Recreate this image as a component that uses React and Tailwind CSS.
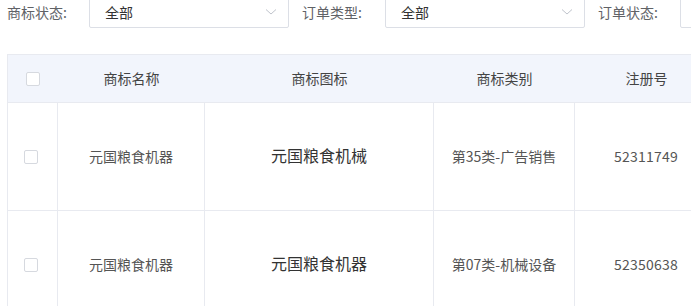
import React from "react";

const font = { fontFamily: '"Noto Sans CJK SC", "Noto Sans", sans-serif' };

function Chevron() {
  return (
    <svg width="12" height="8" viewBox="0 0 12 8" fill="none">
      <path d="M1 1.5 L6 6 L11 1.5" stroke="#c0c4cc" strokeWidth="1" />
    </svg>
  );
}

function Select({ value }) {
  return (
    <div className="h-[32px] w-[200px] shrink-0 border border-[#dcdfe6] rounded-[2px] bg-white flex items-center pl-[15px] pr-[11px] justify-between">
      <span className="text-[14px] text-[#333]">{value}</span>
      <Chevron />
    </div>
  );
}

function Checkbox() {
  return <div className="w-[14px] h-[14px] border border-[#d6d9df] rounded-[2px] bg-white" />;
}

const rows = [
  { name: "元国粮食机器", icon: "元国粮食机械", cat: "第35类-广告销售", no: "52311749" },
  { name: "元国粮食机器", icon: "元国粮食机器", cat: "第07类-机械设备", no: "52350638" },
];

export default function App() {
  return (
    <div className="w-[691px] h-[306px] overflow-hidden bg-white" style={font}>
      <div className="flex items-center mt-[-4px] pl-[7px]">
        <span className="w-[82px] shrink-0 text-[14px] text-[#606266]">商标状态:</span>
        <Select value="全部" />
        <span className="w-[83px] shrink-0 ml-[13px] text-[14px] text-[#606266]">订单类型:</span>
        <Select value="全部" />
        <span className="w-[82px] shrink-0 ml-[13px] text-[14px] text-[#606266]">订单状态:</span>
        <Select value="" />
      </div>
      <div className="mt-[26px] ml-[7px] w-[760px] border-l border-[#e8eaf0]">
        <div className="flex h-[49px] bg-[#f2f5fc] border-t border-b border-[#e8eaf0] text-[14px] text-[#444]">
          <div className="w-[50px] shrink-0 flex items-center pl-[18px]"><Checkbox /></div>
          <div className="w-[147px] shrink-0 flex items-center justify-center">商标名称</div>
          <div className="w-[229px] shrink-0 flex items-center justify-center">商标图标</div>
          <div className="w-[141px] shrink-0 flex items-center justify-center">商标类别</div>
          <div className="w-[143px] shrink-0 flex items-center justify-center">注册号</div>
        </div>
        {rows.map((r, i) => (
          <div key={i} className="flex h-[108px] border-b border-[#e8eaf0] text-[14px] text-[#555]">
            <div className="w-[50px] shrink-0 border-r border-[#e8eaf0] flex items-center pl-[16px]"><Checkbox /></div>
            <div className="w-[147px] shrink-0 border-r border-[#e8eaf0] flex items-center justify-center">{r.name}</div>
            <div className="w-[229px] shrink-0 border-r border-[#e8eaf0] flex items-center justify-center text-[16px] text-[#333] pb-[4px]">{r.icon}</div>
            <div className="w-[141px] shrink-0 border-r border-[#e8eaf0] flex items-center justify-center">{r.cat}</div>
            <div className="w-[143px] shrink-0 border-r border-[#e8eaf0] flex items-center justify-center tracking-[0.25px]">{r.no}</div>
          </div>
        ))}
      </div>
    </div>
  );
}
